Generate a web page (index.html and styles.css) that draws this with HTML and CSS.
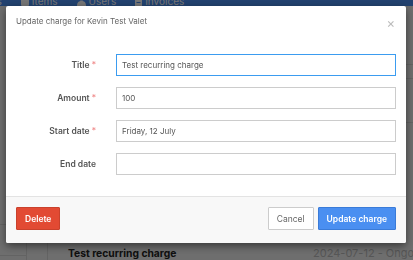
FILE: index.html
```html
<!DOCTYPE html>
<html lang="en">
<head>
    <meta charset="UTF-8">
    <meta name="viewport" content="width=device-width, initial-scale=1.0">
    <title>Update charge</title>
    <link rel="stylesheet" href="styles.css">
</head>
<body>
    <div class="topnav">
        <span class="nav-item">Charges</span>
        <span class="nav-item">
            <svg width="8" height="12" viewBox="0 0 8 12"><rect x="0" y="2" width="8" height="9" rx="1" fill="#fff"/></svg>
            Items
        </span>
        <span class="nav-item">
            <svg width="9" height="12" viewBox="0 0 9 12"><circle cx="4.5" cy="3" r="2.5" fill="#fff"/><path d="M0 11 C0 7 2 6 4.5 6 C7 6 9 7 9 11 Z" fill="#fff"/></svg>
            Users
        </span>
        <span class="nav-item">
            <svg width="7" height="12" viewBox="0 0 7 12"><path d="M0 1 H5 L7 3 V11 H0 Z" fill="#fff"/><rect x="1.5" y="7" width="4" height="1" fill="#4a8ff1"/></svg>
            Invoices
        </span>
    </div>
    <div class="layout">
        <div class="sidebar">
            <div class="side-row"></div>
            <div class="side-row"></div>
        </div>
        <div class="subbar"></div>
        <div class="content">
            <div class="row first"></div>
            <div class="row second"></div>
            <div class="row third"></div>
            <div class="row fill"></div>
            <div class="charge">
                <span class="charge-title">Test recurring charge</span>
                <span class="charge-dates">2024-07-12 - Ongoing</span>
            </div>
        </div>
    </div>

    <div class="backdrop">
        <div class="modal">
            <div class="modal-header">
                <div class="modal-title">Update charge for Kevin Test Valet</div>
                <div class="close">&times;</div>
            </div>
            <div class="modal-body">
                <div class="field">
                    <label>Title <span class="req">*</span></label>
                    <div class="input focus">Test recurring charge</div>
                </div>
                <div class="field">
                    <label>Amount <span class="req">*</span></label>
                    <div class="input">100</div>
                </div>
                <div class="field">
                    <label>Start date <span class="req">*</span></label>
                    <div class="input">Friday, 12 July</div>
                </div>
                <div class="field">
                    <label>End date</label>
                    <div class="input"></div>
                </div>
            </div>
            <div class="modal-footer">
                <button class="btn btn-danger">Delete</button>
                <div class="spacer"></div>
                <button class="btn btn-default">Cancel</button>
                <button class="btn btn-primary">Update charge</button>
            </div>
        </div>
    </div>
</body>
</html>
```

FILE: styles.css
```css
body {
    font-family: Inter, "Noto Sans", sans-serif;
    background-color: #f0f0f0;
    margin: 0;
    width: 413px;
    height: 260px;
    overflow: hidden;
}
.topnav {
    background-color: #4a8ff1;
    height: 6px;
    overflow: hidden;
    display: flex;
    align-items: flex-end;
    gap: 19px;
    margin-left: -38px;
}
.nav-item {
    color: #fff;
    font-size: 10px;
    line-height: 12px;
    display: flex;
    align-items: flex-end;
    gap: 3px;
    margin-bottom: -1px;
    white-space: nowrap;
}
.layout {
    display: flex;
    height: 254px;
}
.sidebar {
    width: 26px;
    border-right: 1px solid #d8d8d8;
    display: flex;
    flex-direction: column;
    justify-content: flex-end;
}
.side-row {
    height: 4px;
    border-top: 1px solid #d8d8d8;
}
.side-row:first-child {
    height: 30px;
}
.subbar {
    width: 20px;
    border-right: 1px solid #d8d8d8;
}
.content {
    flex: 1;
    display: flex;
    flex-direction: column;
}
.row {
    border-bottom: 1px solid #d8d8d8;
}
.row.first {
    height: 58px;
}
.row.second {
    height: 13px;
}
.row.third {
    height: 43px;
}
.row.fill {
    flex: 1;
    border-bottom: none;
}
.charge {
    display: flex;
    justify-content: space-between;
    align-items: center;
    padding-left: 20px;
    height: 14px;
    white-space: nowrap;
}
.charge-title {
    font-size: 10.3px;
    font-weight: 700;
    color: #222;
}
.charge-dates {
    font-size: 11px;
    color: #bbb;
    margin-right: -17px;
}
.backdrop {
    position: fixed;
    top: 0;
    left: 0;
    right: 0;
    bottom: 0;
    background-color: rgba(0, 0, 0, 0.54);
    padding: 6px 7px 0 6px;
}
.modal {
    background-color: #fff;
    border-radius: 2px;
    box-shadow: 0 3px 9px rgba(0, 0, 0, 0.5);
    overflow: hidden;
}
.modal-header {
    display: flex;
    justify-content: space-between;
    align-items: flex-start;
    padding: 10px 10px 0 10px;
    height: 22px;
}
.modal-title {
    font-size: 8px;
    color: #666;
}
.close {
    font-size: 13px;
    line-height: 13px;
    color: #bbb;
    margin-right: 1px;
    margin-top: 1px;
}
.modal-body {
    padding: 16px 10px 21px 0;
    display: flex;
    flex-direction: column;
    gap: 11px;
}
.field {
    display: flex;
    align-items: center;
}
.field label {
    width: 90px;
    text-align: right;
    padding-right: 20px;
    font-size: 8.5px;
    font-weight: 600;
    color: #555;
}
.req {
    color: #f08a8a;
    font-weight: 400;
}
.input {
    flex: 1;
    height: 20px;
    border: 1px solid #ccc;
    font-size: 8px;
    color: #555;
    line-height: 20px;
    padding-left: 5px;
}
.input.focus {
    border-color: #3b9cf0;
}
.modal-footer {
    display: flex;
    align-items: center;
    gap: 4px;
    background-color: #f8f8f8;
    border-top: 1px solid #e3e3e3;
    padding: 10px 10px 13px 10px;
}
.spacer {
    flex: 1;
}
.btn {
    font-family: Inter, "Noto Sans", sans-serif;
    font-size: 8.5px;
    height: 23px;
    padding: 0 8px;
    border-radius: 1px;
    border: 1px solid;
    cursor: pointer;
}
.btn-danger {
    background-color: #e24a33;
    border-color: #c9412c;
    color: #fff;
    font-weight: 600;
}
.btn-default {
    background-color: #fff;
    border-color: #ccc;
    color: #666;
}
.btn-primary {
    background-color: #4a8ff1;
    border-color: #3a7bd8;
    color: #fff;
    font-weight: 600;
}
```
